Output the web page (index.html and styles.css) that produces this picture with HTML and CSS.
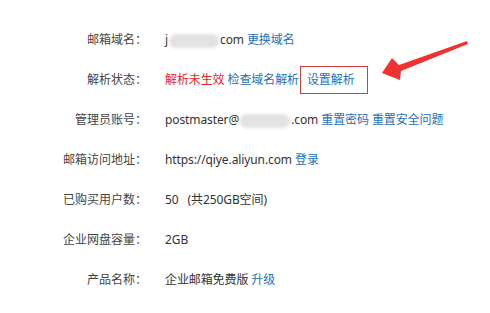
FILE: index.html
```html
<!DOCTYPE html>
<html lang="zh-CN">
<head>
  <meta charset="UTF-8" />
  <title>邮箱信息</title>
  <link rel="stylesheet" href="styles.css">
</head>
<body>
  <div class="info">
    <div class="row">
      <span class="label">邮箱域名：</span>
      <span class="value">j<span class="mask mask-short"></span>com <a href="#">更换域名</a></span>
    </div>
    <div class="row">
      <span class="label">解析状态：</span>
      <span class="value"><span class="warn">解析未生效</span> <a href="#">检查域名解析</a><a href="#" class="boxed">设置解析</a></span>
    </div>
    <div class="row">
      <span class="label">管理员账号：</span>
      <span class="value">postmaster@<span class="mask mask-long"></span>.com <a href="#">重置密码</a> <a href="#">重置安全问题</a></span>
    </div>
    <div class="row">
      <span class="label">邮箱访问地址：</span>
      <span class="value">https://qiye.aliyun.com <a href="#">登录</a></span>
    </div>
    <div class="row">
      <span class="label">已购买用户数：</span>
      <span class="value">50&nbsp;&nbsp;&nbsp;(共250GB空间)</span>
    </div>
    <div class="row">
      <span class="label">企业网盘容量：</span>
      <span class="value">2GB</span>
    </div>
    <div class="row">
      <span class="label">产品名称：</span>
      <span class="value">企业邮箱免费版 <a href="#">升级</a></span>
    </div>
  </div>

  <!-- annotation arrow -->
  <svg class="arrow" width="490" height="313" viewBox="0 0 490 313">
    <polygon points="467,41 399,65 392,58 382,73 400,80 401,71 468,44" fill="#ee3333" />
  </svg>
</body>
</html>
```

FILE: styles.css
```css
* {
  margin: 0;
  padding: 0;
  box-sizing: border-box;
}

body {
  width: 490px;
  height: 313px;
  background: #ffffff;
  color: #333333;
  font-family: "Noto Sans", "Noto Sans CJK SC", sans-serif;
  font-size: 12px;
  position: relative;
  overflow: hidden;
}

.info {
  padding-top: 20px;
}

.row {
  display: grid;
  grid-template-columns: 147px 1fr;
  column-gap: 18px;
  height: 40px;
  align-items: center;
  line-height: 16px;
}

.label {
  text-align: right;
  color: #444444;
}

.value {
  white-space: nowrap;
  letter-spacing: -0.1px;
}

.value a {
  color: #1f6fb8;
  text-decoration: none;
}

.warn {
  color: #e8231f;
}

.boxed {
  display: inline-block;
  margin-left: 1px;
  padding: 5px 12px 5px 6px;
  border: 1px solid #d93a3a;
}

.mask {
  display: inline-block;
  height: 14px;
  vertical-align: middle;
  background: #e2e2e2;
  border-radius: 7px;
  filter: blur(1.5px);
}

.mask-short {
  width: 50px;
  margin: 0 1px;
}

.mask-long {
  width: 50px;
  margin: 0 1px;
}

.arrow {
  position: absolute;
  top: 0;
  left: 0;
  pointer-events: none;
}
```
